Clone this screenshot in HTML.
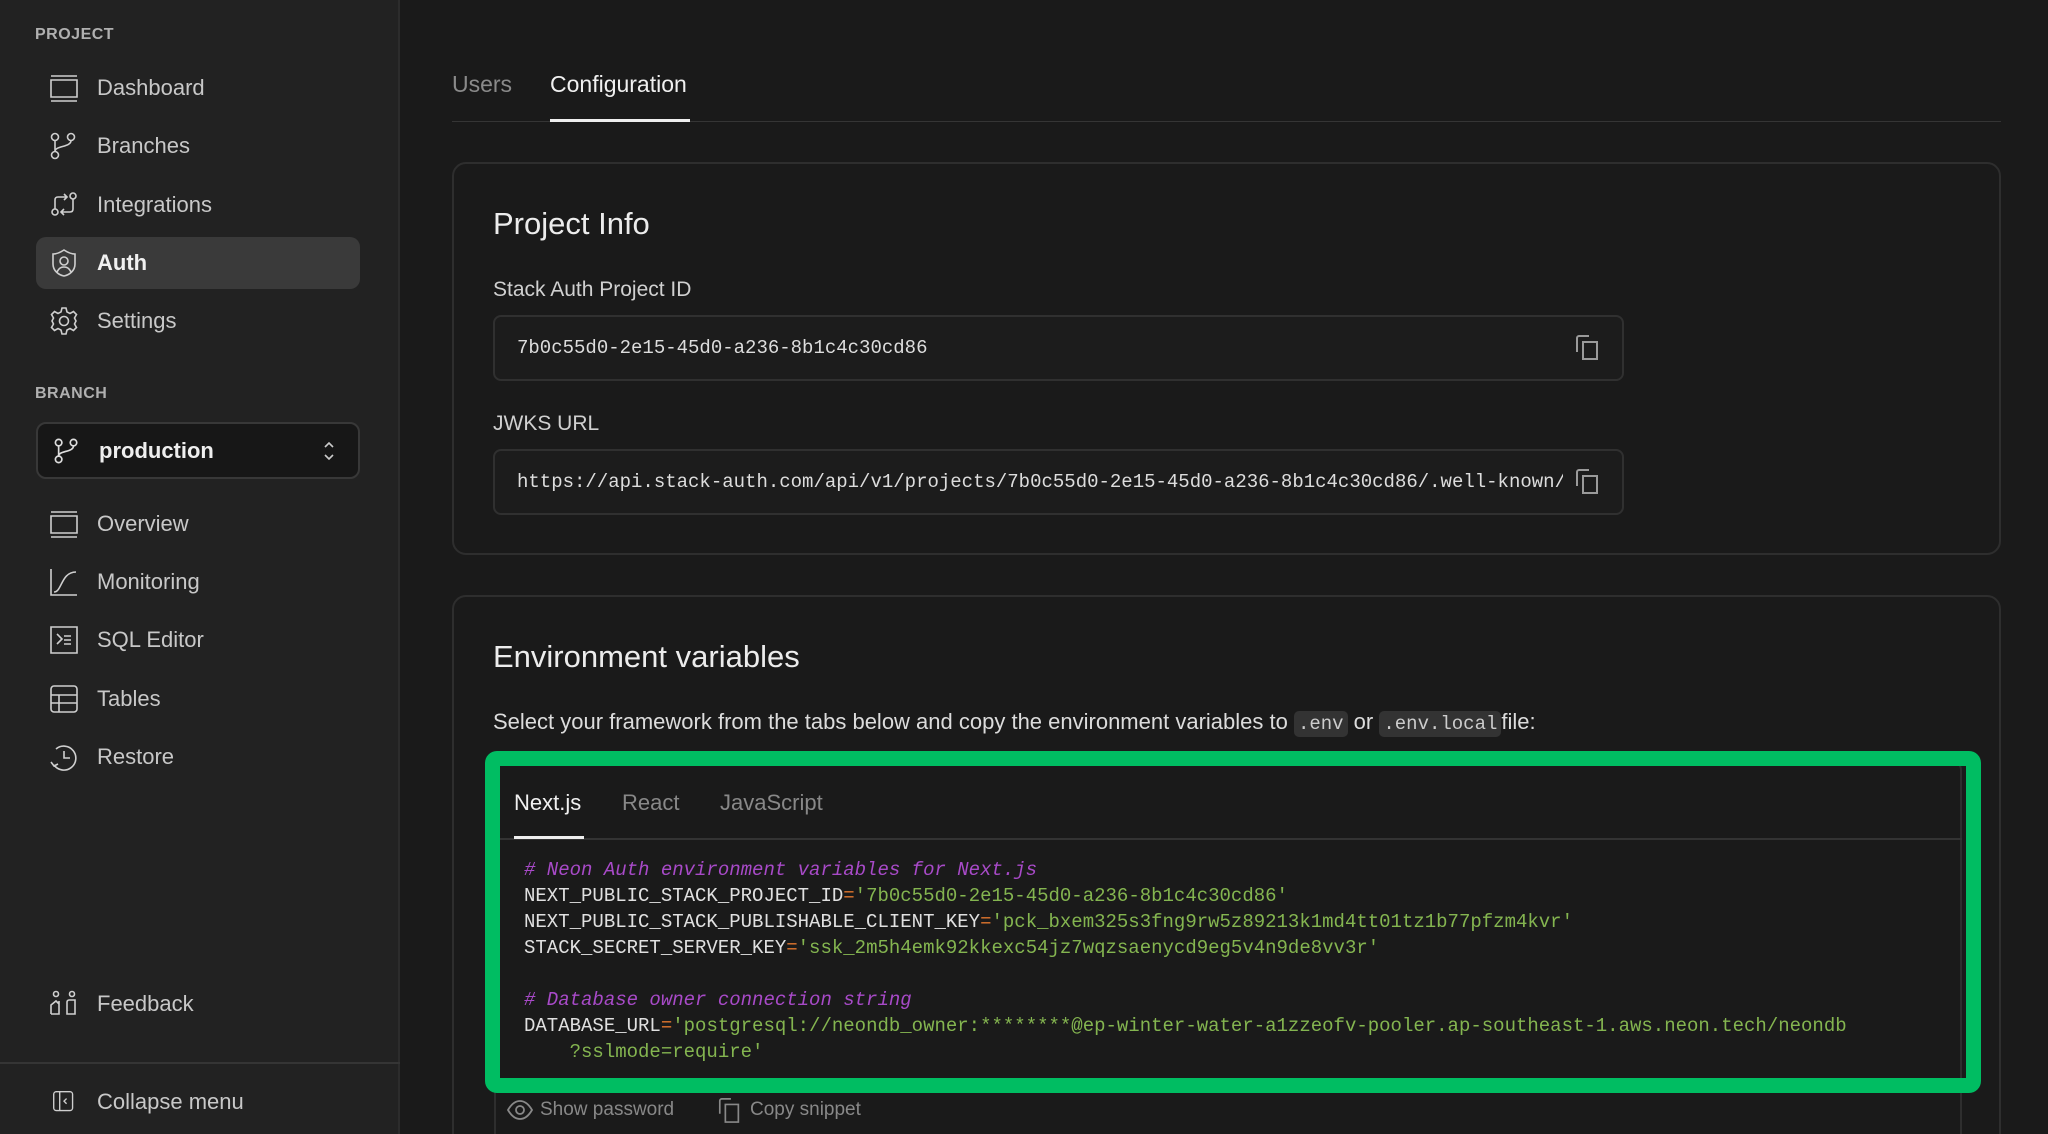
<!DOCTYPE html>
<html style="overflow:hidden;width:2048px;height:1134px"><head><meta charset="utf-8"><style>
*{box-sizing:border-box;margin:0;padding:0}
body{width:2048px;height:1134px;overflow:hidden;background:#1a1a1a;font-family:"Liberation Sans",sans-serif;color:#e6e6e6;position:relative}
.sb{position:absolute;left:0;top:0;width:400px;height:1134px;background:#222;border-right:2px solid #2c2c2c}
.lbl{position:absolute;left:35px;font-size:16px;font-weight:bold;color:#b0b0b0;letter-spacing:0.5px}
.it{position:absolute;left:36px;width:324px;height:52px;display:flex;align-items:center;font-size:22px;color:#c8c8c8}
.it svg{position:absolute;left:14px;width:28px;height:28px;fill:none;stroke:#cfcfcf;stroke-width:1.6}
.it span{position:absolute;left:61px}
.act{background:#3a3a3a;border-radius:10px;color:#f0f0f0}
.mono{font-family:"Liberation Mono",monospace}
.card{position:absolute;left:452px;width:1549px;border:2px solid #2e2e2e;border-radius:14px}
.h{position:absolute;left:493px;font-size:31px;color:#ececec}
.f{position:absolute;left:493px;font-size:21px;color:#d0d0d0}
.inp{position:absolute;left:493px;width:1131px;height:66px;border:2px solid #303030;border-radius:8px;background:#1c1c1c}
.inp .t{position:absolute;left:22px;top:20px;font-size:19px;color:#ddd;white-space:nowrap;overflow:hidden;width:1046px}
.cp{position:absolute;left:1574px;width:28px;height:28px;fill:none;stroke:#9a9a9a;stroke-width:2}
code{font-family:"Liberation Mono",monospace;font-size:19px;background:#333;border-radius:5px;padding:2px 4px;color:#ccc}
.c{color:#a84ac8;font-style:italic}.s{color:#84b550}.o{color:#e0762e}
.code div{height:26px;white-space:pre}
</style></head><body>
<div class="sb">
<div class="lbl" style="top:26px">PROJECT</div>
<div class="it" style="top:62px"><svg viewBox="0 0 28 28"><path d="M1 2h26M1 27h26M1 6h26v17H1z"/></svg><span>Dashboard</span></div>
<div class="it" style="top:120px"><svg viewBox="0 0 28 28"><circle cx="5" cy="5" r="3.5"/><circle cx="21" cy="5" r="3.5"/><circle cx="5" cy="23" r="3.5"/><path d="M5 8.5v11M21 8.5c0 7-16 5-16 11"/></svg><span>Branches</span></div>
<div class="it" style="top:179px"><svg viewBox="0 0 28 28"><circle cx="5" cy="21" r="3"/><circle cx="23" cy="5" r="3"/><path d="M5 18V9c0-2 1-3 3-3h9M14 3l3 3-3 3M23 8v10c0 2-1 3-3 3h-9M14 18l-3 3 3 3"/></svg><span>Integrations</span></div>
<div class="it act" style="top:237px"><svg viewBox="0 0 28 28"><path d="M3 5c4 0 8-2 11-4 3 2 7 4 11 4v10c0 7-6 11-11 12C9 26 3 22 3 15z"/><circle cx="14" cy="12" r="4"/><path d="M7 23c2-4 4-5 7-5s5 1 7 5"/></svg><span style="font-weight:bold">Auth</span></div>
<div class="it" style="top:295px"><svg viewBox="0 0 28 28"><circle cx="14" cy="14" r="4.5"/><path d="M12 1h4l1 4 3 1.5 3.5-2 3 3-2 3.5L26 14l-1.5 3 2 3.5-3 3-3.5-2L17 23l-1 4h-4l-1-4-3-1.5-3.5 2-3-3 2-3.5L2 14l1.5-3-2-3.5 3-3 3.5 2L11 5z"/></svg><span>Settings</span></div>
<div class="lbl" style="top:385px">BRANCH</div>
<div style="position:absolute;left:36px;top:422px;width:324px;height:57px;background:#171717;border:2px solid #383838;border-radius:10px">
<svg style="position:absolute;left:16px;top:14px;width:26px;height:26px;fill:none;stroke:#ddd;stroke-width:1.8" viewBox="0 0 28 28"><circle cx="5" cy="5" r="3.5"/><circle cx="21" cy="5" r="3.5"/><circle cx="5" cy="23" r="3.5"/><path d="M5 8.5v11M21 8.5c0 7-16 5-16 11"/></svg>
<span style="position:absolute;left:61px;top:14px;font-size:22px;font-weight:bold;color:#eee">production</span>
<svg style="position:absolute;left:284px;top:15px;width:14px;height:24px;fill:none;stroke:#ccc;stroke-width:1.6" viewBox="0 0 14 24"><path d="M3 8l4-4 4 4M3 16l4 4 4-4"/></svg></div>
<div class="it" style="top:498px"><svg viewBox="0 0 28 28"><path d="M1 2h26M1 27h26M1 6h26v17H1z"/></svg><span>Overview</span></div>
<div class="it" style="top:556px"><svg viewBox="0 0 28 28"><path d="M1 1v26h26M4 24c8 0 7-20 22-20"/></svg><span>Monitoring</span></div>
<div class="it" style="top:614px"><svg viewBox="0 0 28 28"><path d="M1 1h26v26H1zM7 8l5 5-5 5M14 10h7M14 14h7M14 18h7"/></svg><span>SQL Editor</span></div>
<div class="it" style="top:673px"><svg viewBox="0 0 28 28"><rect x="1" y="1" width="26" height="26" rx="3"/><path d="M1 10h26M1 18h26M9 10v17"/></svg><span>Tables</span></div>
<div class="it" style="top:731px"><svg viewBox="0 0 28 28"><path d="M4 22A12 12 0 1 0 6 6M1 19l3 4 4-2M14 8v7h6"/></svg><span>Restore</span></div>
<div class="it" style="top:978px"><svg viewBox="0 0 28 28"><circle cx="6" cy="4" r="2.5"/><circle cx="22" cy="4" r="2.5"/><path d="M1 24v-9l5-4 3 3v-3M9 11v13H1M17 24V12c0-1 1-2 2-2h6v14z"/></svg><span>Feedback</span></div>
<div style="position:absolute;left:0;top:1062px;width:400px;height:2px;background:#353535"></div>
<div class="it" style="top:1076px"><svg viewBox="0 0 28 28" style="left:16px;width:24px;height:24px"><rect x="2" y="2" width="22" height="22" rx="3"/><path d="M9 2v22M17 10l-3 3 3 3"/></svg><span>Collapse menu</span></div>
</div>

<div style="position:absolute;left:452px;top:71px;font-size:23px;color:#8a8a8a">Users</div>
<div style="position:absolute;left:550px;top:71px;font-size:23px;color:#f0f0f0">Configuration</div>
<div style="position:absolute;left:452px;top:121px;width:1549px;height:1px;background:#353535"></div>
<div style="position:absolute;left:550px;top:119px;width:140px;height:3px;background:#eee"></div>

<div class="card" style="top:162px;height:393px"></div>
<div class="h" style="top:206px">Project Info</div>
<div class="f" style="top:278px">Stack Auth Project ID</div>
<div class="inp" style="top:315px"><div class="t mono">7b0c55d0-2e15-45d0-a236-8b1c4c30cd86</div></div>
<svg class="cp" style="top:334px" viewBox="0 0 28 28"><path d="M3 18V4c0-1 1-2 2-2h10M9 8h14v17H9z"/></svg>
<div class="f" style="top:412px">JWKS URL</div>
<div class="inp" style="top:449px"><div class="t mono">https://api.stack-auth.com/api/v1/projects/7b0c55d0-2e15-45d0-a236-8b1c4c30cd86/.well-known/jwks.json</div></div>
<svg class="cp" style="top:468px" viewBox="0 0 28 28"><path d="M3 18V4c0-1 1-2 2-2h10M9 8h14v17H9z"/></svg>

<div class="card" style="top:595px;height:560px"></div>
<div class="h" style="top:639px">Environment variables</div>
<div class="f" style="top:709px;color:#dcdcdc;font-size:22px">Select your framework from the tabs below and copy the environment variables to <code>.env</code> or <code>.env.local</code>file:</div>

<div style="position:absolute;left:494px;top:760px;width:1468px;height:400px;border:2px solid #2e2e2e;border-radius:10px;background:#1a1a1a"></div>
<div style="position:absolute;left:485px;top:751px;width:1496px;height:342px;border:15px solid #00bd62;border-radius:12px"></div>
<div style="position:absolute;left:514px;top:790px;font-size:22px;color:#f0f0f0">Next.js</div>
<div style="position:absolute;left:622px;top:790px;font-size:22px;color:#888">React</div>
<div style="position:absolute;left:720px;top:790px;font-size:22px;color:#888">JavaScript</div>
<div style="position:absolute;left:500px;top:838px;width:1462px;height:2px;background:#333"></div>
<div style="position:absolute;left:514px;top:836px;width:70px;height:3px;background:#eee"></div>
<div class="code mono" style="position:absolute;left:524px;top:859px;font-size:19px;color:#e0e0e0">
<div class="c"># Neon Auth environment variables for Next.js</div>
<div>NEXT_PUBLIC_STACK_PROJECT_ID<span class="o">=</span><span class="s">'7b0c55d0-2e15-45d0-a236-8b1c4c30cd86'</span></div>
<div>NEXT_PUBLIC_STACK_PUBLISHABLE_CLIENT_KEY<span class="o">=</span><span class="s">'pck_bxem325s3fng9rw5z89213k1md4tt01tz1b77pfzm4kvr'</span></div>
<div>STACK_SECRET_SERVER_KEY<span class="o">=</span><span class="s">'ssk_2m5h4emk92kkexc54jz7wqzsaenycd9eg5v4n9de8vv3r'</span></div>
<div> </div>
<div class="c"># Database owner connection string</div>
<div>DATABASE_URL<span class="o">=</span><span class="s">'postgresql://neondb_owner:********@ep-winter-water-a1zzeofv-pooler.ap-southeast-1.aws.neon.tech/neondb</span></div>
<div class="s">    ?sslmode=require'</div>
</div>
<svg style="position:absolute;left:507px;top:1098px;width:26px;height:24px;fill:none;stroke:#888;stroke-width:1.8" viewBox="0 0 26 24"><path d="M1 12C5 5 9 3 13 3s8 2 12 9c-4 7-8 9-12 9S5 19 1 12z"/><circle cx="13" cy="12" r="4"/></svg>
<div style="position:absolute;left:540px;top:1099px;font-size:19px;color:#888">Show password</div>
<svg style="position:absolute;left:717px;top:1096px;width:26px;height:28px;fill:none;stroke:#888;stroke-width:1.8" viewBox="0 0 28 28"><path d="M3 18V4c0-1 1-2 2-2h10M9 8h14v19H9z"/></svg>
<div style="position:absolute;left:750px;top:1099px;font-size:19px;color:#888">Copy snippet</div>
</body></html>
